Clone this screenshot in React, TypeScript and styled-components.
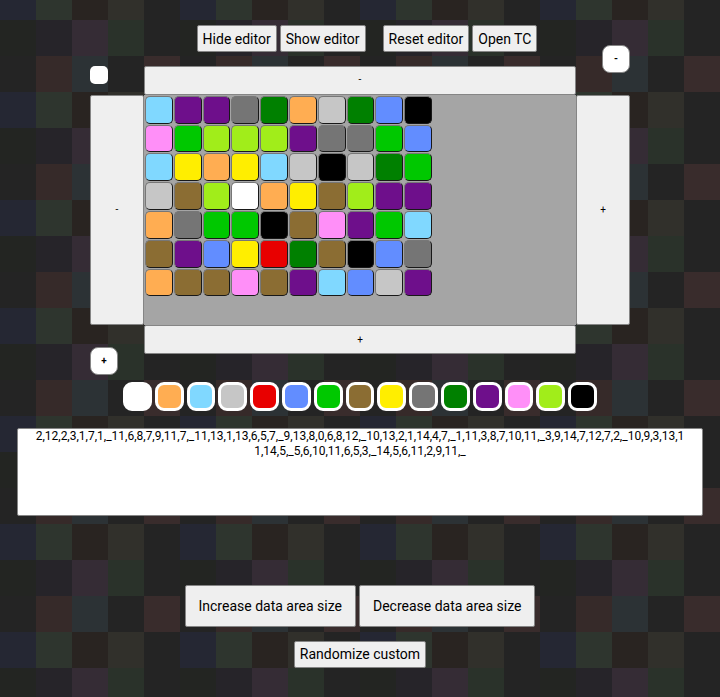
import React, { useState } from "react";
import styled, { createGlobalStyle } from "styled-components";

const tileRows = [
  ["#252733", "#2e352e", "#292421", "#31302b", "#242424"],
  ["#232522", "#262429", "#352c35", "#2a322a", "#242424"],
  ["#242424", "#362a29", "#2c3235", "#242424", "#392c2c"],
];

const tileSvg = `<svg xmlns="http://www.w3.org/2000/svg" width="180" height="108" shape-rendering="crispEdges">${tileRows
  .map((row, y) =>
    row
      .map((fill, x) => `<rect x="${x * 36}" y="${y * 36}" width="36" height="36" fill="${fill}"/>`)
      .join("")
  )
  .join("")}</svg>`;

const GlobalStyle = createGlobalStyle`
  * { box-sizing: border-box; }
  body {
    margin: 0;
    min-height: 100vh;
    font-family: Roboto, "Liberation Sans", sans-serif;
    background: #242424 url("data:image/svg+xml,${encodeURIComponent(tileSvg)}") 0 -16px;
  }
  button, textarea { font-family: inherit; color: #000; }
`;

const palette = [
  { name: "White", color: "#ffffff" },
  { name: "Orange", color: "#ffad52" },
  { name: "Sky", color: "#80d8ff" },
  { name: "Silver", color: "#c6c6c6" },
  { name: "Red", color: "#e80000" },
  { name: "Blue", color: "#628dff" },
  { name: "Green", color: "#00c800" },
  { name: "Brown", color: "#8b6d33" },
  { name: "Yellow", color: "#ffee00" },
  { name: "Gray", color: "#757575" },
  { name: "Dark green", color: "#008000" },
  { name: "Purple", color: "#6e0f8b" },
  { name: "Pink", color: "#ff8ff8" },
  { name: "Lime", color: "#a1ed1a" },
  { name: "Black", color: "#000000" },
];

const initialData =
  "2,12,2,3,1,7,1,_11,6,8,7,9,11,7,_11,13,1,13,6,5,7,_9,13,8,0,6,8,12,_10,13,2,1,14,4,7,_1,11,3,8,7,10,11,_3,9,14,7,12,7,2,_10,9,3,13,11,14,5,_5,6,10,11,6,5,3,_14,5,6,11,2,9,11,_";

const Page = styled.main`
  display: flex;
  flex-direction: column;
  align-items: center;
  padding: 25px 0 28px;
`;

const Toolbar = styled.div`
  display: flex;
  justify-content: center;
  gap: 17px;
  padding-left: 14px;
`;

const ButtonGroup = styled.div`
  display: flex;
  gap: 3px;
`;

const Button = styled.button<{ $large?: boolean }>`
  height: ${(p) => (p.$large ? 42 : 27)}px;
  padding: 0 ${(p) => (p.$large ? 13 : 5)}px;
  border: 1px solid #858585;
  border-radius: 2px;
  background: #efefef;
  font-size: 14px;
  line-height: 16px;
  white-space: nowrap;
`;

const Board = styled.section`
  position: relative;
  display: grid;
  grid-template-columns: 1fr 8fr 1fr;
  width: 75%;
  margin-top: 14px;
`;

const Edge = styled.button<{ $horizontal?: boolean }>`
  padding: 0;
  border: 1px solid #858585;
  border-radius: 2px;
  background: #efefef;
  font-size: 10px;
  line-height: 12px;
  ${(p) => (p.$horizontal ? "grid-column: 2; aspect-ratio: 15 / 1;" : "")}
`;

const Toggle = styled.button`
  width: 18px;
  height: 18px;
  padding: 0;
  border: 0;
  border-radius: 5px;
  background: #fff;
`;

const CornerButton = styled.button<{ $corner: "top" | "bottom" }>`
  position: absolute;
  ${(p) => (p.$corner === "top" ? "top: -21px; right: 0;" : "bottom: -21px; left: 0;")}
  width: 28px;
  height: 28px;
  padding: 0;
  border: 1px solid #858585;
  border-radius: 8px;
  background: #fff;
  font-size: 10px;
  font-weight: 700;
  line-height: 12px;
`;

const Canvas = styled.div`
  display: grid;
  grid-template-columns: repeat(15, 1fr);
  aspect-ratio: 15 / 8;
  background: #a5a5a5;
`;

const Column = styled.div`
  display: grid;
  grid-template-rows: repeat(8, 1fr);
`;

const Cell = styled.button<{ $color: string }>`
  margin: 1px 0 0 1px;
  padding: 0;
  border: 1px solid;
  border-color: #777 #181818 #181818 #777;
  border-radius: 5px;
  background: ${(p) => p.$color};
`;

const Palette = styled.div`
  display: flex;
  justify-content: center;
  gap: 3px;
  width: 100%;
  margin-top: 28px;
`;

const Swatch = styled.button<{ $color: string }>`
  flex: 0 0 4%;
  aspect-ratio: 1;
  padding: 0;
  border: 3px solid #fff;
  border-radius: 9px;
  background: ${(p) => p.$color};
`;

const DataArea = styled.textarea`
  display: block;
  width: calc(95% + 2px);
  height: 88px;
  margin: 17px 0 69px;
  padding: 0 14px;
  border: 1px solid #858585;
  border-radius: 2px;
  background: #fff;
  font-size: 12px;
  line-height: 15px;
  text-align: center;
  word-break: break-all;
  resize: none;
`;

const Footer = styled.div`
  display: flex;
  flex-direction: column;
  align-items: center;
  gap: 14px;
`;

export default function App() {
  const [data, setData] = useState(initialData);
  const columns = data
    .split("_")
    .filter(Boolean)
    .map((column) => column.split(",").filter(Boolean).map(Number));

  return (
    <>
      <GlobalStyle />
      <Page>
        <Toolbar>
          <ButtonGroup>
            <Button>Hide editor</Button>
            <Button>Show editor</Button>
          </ButtonGroup>
          <ButtonGroup>
            <Button>Reset editor</Button>
            <Button>Open TC</Button>
          </ButtonGroup>
        </Toolbar>
        <Board aria-label="Editor">
          <Toggle aria-label="Current color" />
          <Edge $horizontal aria-label="Remove top row">-</Edge>
          <span />
          <Edge aria-label="Remove left column">-</Edge>
          <Canvas>
            {columns.map((column, x) => (
              <Column key={x}>
                {column.map((value, y) => (
                  <Cell
                    key={y}
                    $color={palette[value]?.color ?? "transparent"}
                    aria-label={`Column ${x + 1}, row ${y + 1}`}
                  />
                ))}
              </Column>
            ))}
          </Canvas>
          <Edge aria-label="Add right column">+</Edge>
          <Edge $horizontal aria-label="Add bottom row">+</Edge>
          <CornerButton $corner="top" aria-label="Shrink">-</CornerButton>
          <CornerButton $corner="bottom" aria-label="Grow">+</CornerButton>
        </Board>
        <Palette>
          {palette.map(({ name, color }) => (
            <Swatch key={name} $color={color} aria-label={name} />
          ))}
        </Palette>
        <DataArea
          aria-label="Layout data"
          spellCheck={false}
          value={data}
          onChange={(event) => setData(event.target.value)}
        />
        <Footer>
          <ButtonGroup>
            <Button $large>Increase data area size</Button>
            <Button $large>Decrease data area size</Button>
          </ButtonGroup>
          <Button>Randomize custom</Button>
        </Footer>
      </Page>
    </>
  );
}
